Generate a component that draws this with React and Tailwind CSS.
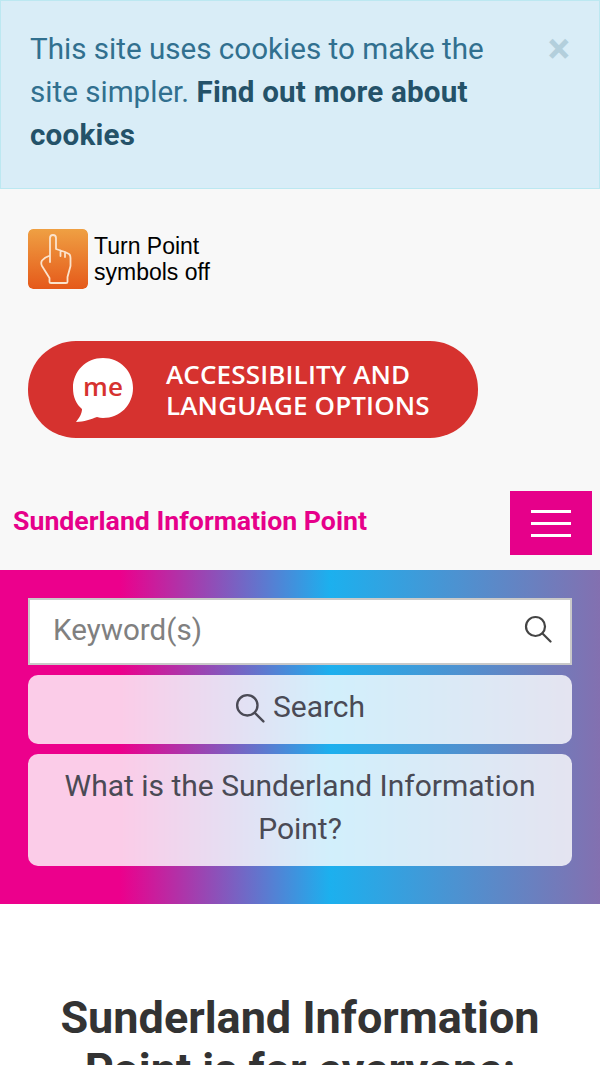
const roboto = { fontFamily: "Roboto, sans-serif" };

const HandIcon = () => (
  <svg viewBox="0 0 60 60" className="w-[60px] h-[60px] shrink-0 rounded-[5px]">
    <defs>
      <linearGradient id="orange" x1="0" y1="0" x2="0" y2="1">
        <stop offset="0" stopColor="#efa043" />
        <stop offset="1" stopColor="#e5591a" />
      </linearGradient>
    </defs>
    <rect width="60" height="60" rx="5" fill="url(#orange)" />
    <path
      d="M22 33 V9 Q22 6 25 6 Q28 6 28 9 V20 L32.500 21.500 V27 V21.500 L37 23 V28 V23 L41 25 Q42.500 26 42.500 29 V37 L39.500 48 V53 Q39.500 54 38 54 H23 Q21.500 54 21.500 53 V49 L14 37 Q12.500 34 14 31.500 Q17 28 22 26.500"
      fill="none"
      stroke="#fbe3cc"
      strokeWidth="1.800"
      strokeLinejoin="round"
      strokeLinecap="round"
    />
  </svg>
);

const MeBubble = () => (
  <svg viewBox="0 0 62 66" className="w-[62px] h-[66px] shrink-0">
    <path
      d="M31 1 C14 1 1 14 1 31 C1 40 4 47 10 52 C10 57 7 61 4 65 C12 65 19 62 25 60 C27 60.500 29 61 31 61 C48 61 61 48 61 31 C61 14 48 1 31 1 Z"
      fill="#ffffff"
    />
    <text x="31" y="39" textAnchor="middle" fontFamily="'Open Sans', sans-serif" fontWeight="600" fontSize="26" fill="#d6322f">
      me
    </text>
  </svg>
);

const Magnifier = ({ className }) => (
  <svg viewBox="0 0 28 28" fill="none" stroke="currentColor" strokeWidth="2.200" strokeLinecap="round" className={className}>
    <circle cx="11.500" cy="11.500" r="9.500" />
    <line x1="18.500" y1="18.500" x2="26.500" y2="26.500" />
  </svg>
);

const App = () => {
  return (
    <div className="h-[1065px] overflow-hidden bg-white" style={roboto}>
      {/* cookie alert */}
      <div className="flex justify-between h-[189px] pl-[29px] pr-[29px] pt-[27px] bg-[#d9edf7] border border-[#bce8f1] text-[29.600px] leading-[43px] text-[#31708f]">
        <p className="w-[490px]">
          This site uses cookies to make the site simpler.{" "}
          <a className="font-bold text-[#245269] tracking-[0.2px]">Find out more about cookies</a>
        </p>
        <span className="text-[#b3cfdc] font-bold text-[42px] leading-[41px]">×</span>
      </div>

      {/* header */}
      <div className="bg-[#f8f8f8] h-[381px] pt-[40px]">
        <div className="flex items-center pl-[28px]">
          <HandIcon />
          <p className="ml-[6px] text-[23px] leading-[26px] text-black" style={{ fontFamily: '"Liberation Sans", sans-serif' }}>
            Turn Point
            <br />
            symbols off
          </p>
        </div>
        <div className="flex items-center w-[450px] h-[97px] ml-[28px] mt-[52px] pl-[44px] rounded-[48px] bg-[#d6322f]">
          <MeBubble />
          <p className="ml-[32px] text-white font-semibold text-[26px] leading-[31px] tracking-[0.15px] whitespace-nowrap" style={{ fontFamily: '"Open Sans", sans-serif' }}>
            ACCESSIBILITY AND
            <br />
            LANGUAGE OPTIONS
          </p>
        </div>
        <div className="flex justify-between items-center mt-[53px] pl-[13px] pr-[8px]">
          <span className="text-[26.700px] font-bold text-[#e6008a] -mt-[4px]">Sunderland Information Point</span>
          <button className="flex flex-col justify-center gap-[9px] w-[82px] h-[64px] px-[21px] bg-[#e6008a]">
            <span className="block h-[3px] bg-white" />
            <span className="block h-[3px] bg-white" />
            <span className="block h-[3px] bg-white" />
          </button>
        </div>
      </div>

      {/* search band */}
      <div className="flex flex-col gap-[10px] h-[334px] px-[28px] pt-[28px] bg-[linear-gradient(to_right,#ec008c_20%,#1cb0ee_55%,#8370b0_100%)]">
        <div className="flex items-center justify-between h-[67px] pl-[23px] pr-[18px] bg-white border-2 border-[#c9c9c9]">
          <span className="text-[29.600px] text-[#808080] pb-[2px]">Keyword(s)</span>
          <Magnifier className="w-[28px] h-[28px] text-[#444444] mb-[6px]" />
        </div>
        <button className="flex items-center justify-center gap-[8px] h-[69px] pb-[6px] rounded-[10px] bg-white/80 text-[30px] text-[#4a4a55]">
          <Magnifier className="w-[30px] h-[30px] mt-[2px]" />
          Search
        </button>
        <button className="h-[112px] pb-[6px] rounded-[10px] bg-white/80 text-[30px] leading-[43px] text-[#4a4a55] px-[30px]">
          What is the Sunderland Information Point?
        </button>
      </div>

      {/* intro */}
      <h1 className="mt-[88px] px-[40px] text-center text-[45px] leading-[52px] font-bold text-[#333333]">
        Sunderland Information Point is for everyone:
      </h1>
    </div>
  );
};

export default App;
